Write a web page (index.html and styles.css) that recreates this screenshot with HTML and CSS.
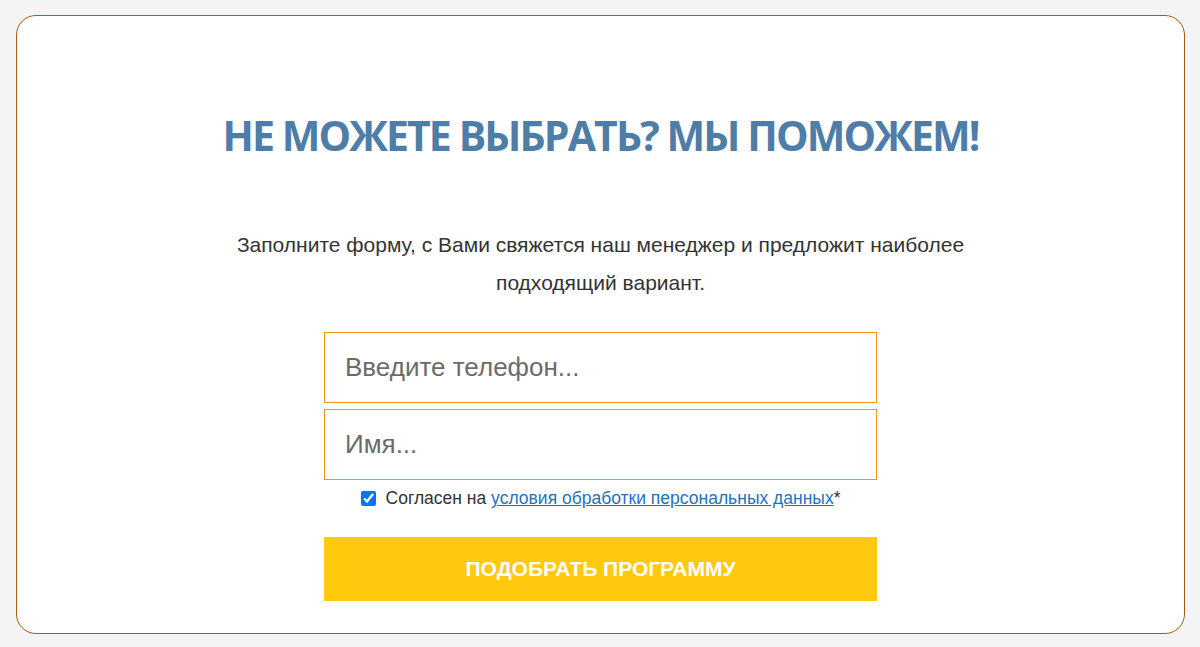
FILE: index.html
```html
<!DOCTYPE html>
<html lang="ru">
<head>
<meta charset="utf-8">
<title>Форма</title>
<link rel="stylesheet" href="styles.css">
</head>
<body>
<div class="card">
  <h2 class="title">НЕ МОЖЕТЕ ВЫБРАТЬ? МЫ ПОМОЖЕМ!</h2>
  <p class="lead">Заполните форму, с Вами свяжется наш менеджер и предложит наиболее подходящий вариант.</p>
  <form class="form">
    <input class="field" type="text" placeholder="Введите телефон...">
    <input class="field" type="text" placeholder="Имя...">
    <label class="agree"><input type="checkbox" checked>Согласен на <a href="#">условия обработки персональных данных</a>*</label>
    <button class="submit" type="button">ПОДОБРАТЬ ПРОГРАММУ</button>
  </form>
</div>
</body>
</html>
```
FILE: styles.css
```css
html, body { margin: 0; padding: 0; }
body {
  background: #f4f4f4;
  padding: 15px 15px 13px 16px;
  font-family: "Liberation Sans", Arial, sans-serif;
}
.card {
  background: #fff;
  border: 1px solid #a65a0c;
  border-radius: 20px;
  height: 619px;
  box-sizing: border-box;
  padding-top: 91px;
  display: flex;
  flex-direction: column;
  align-items: center;
}
.title {
  margin: 0;
  font-family: "Open Sans", sans-serif;
  font-weight: 700;
  font-size: 41px;
  line-height: 56px;
  color: #4e7da8;
  letter-spacing: -1.9px;
}
.lead {
  margin: 63px 0 0;
  width: 760px;
  text-align: center;
  font-size: 21px;
  line-height: 38px;
  color: #333;
}
.form {
  margin-top: 30px;
  width: 553px;
  display: flex;
  flex-direction: column;
}
.field {
  height: 71px;
  box-sizing: border-box;
  border: 1px solid #f7941d;
  padding: 0 20px;
  font-family: "Liberation Sans", Arial, sans-serif;
  font-size: 26px;
  color: #333;
  margin: 0 0 6px;
  outline: none;
}
.field::placeholder { color: #6b6b6b; }
.agree {
  align-self: center;
  display: flex;
  align-items: center;
  font-size: 17.5px;
  line-height: 20px;
  color: #333;
  margin-top: 2px;
  white-space: pre;
}
.agree input { margin: 0 10px 0 0; width: 15px; height: 15px; }
.agree a { color: #1e73be; text-decoration: underline; }
.submit {
  margin-top: 29px;
  height: 64px;
  border: none;
  background: #ffc90e;
  color: #fff;
  font-family: "Liberation Sans", Arial, sans-serif;
  font-weight: 700;
  font-size: 21px;
}
```
